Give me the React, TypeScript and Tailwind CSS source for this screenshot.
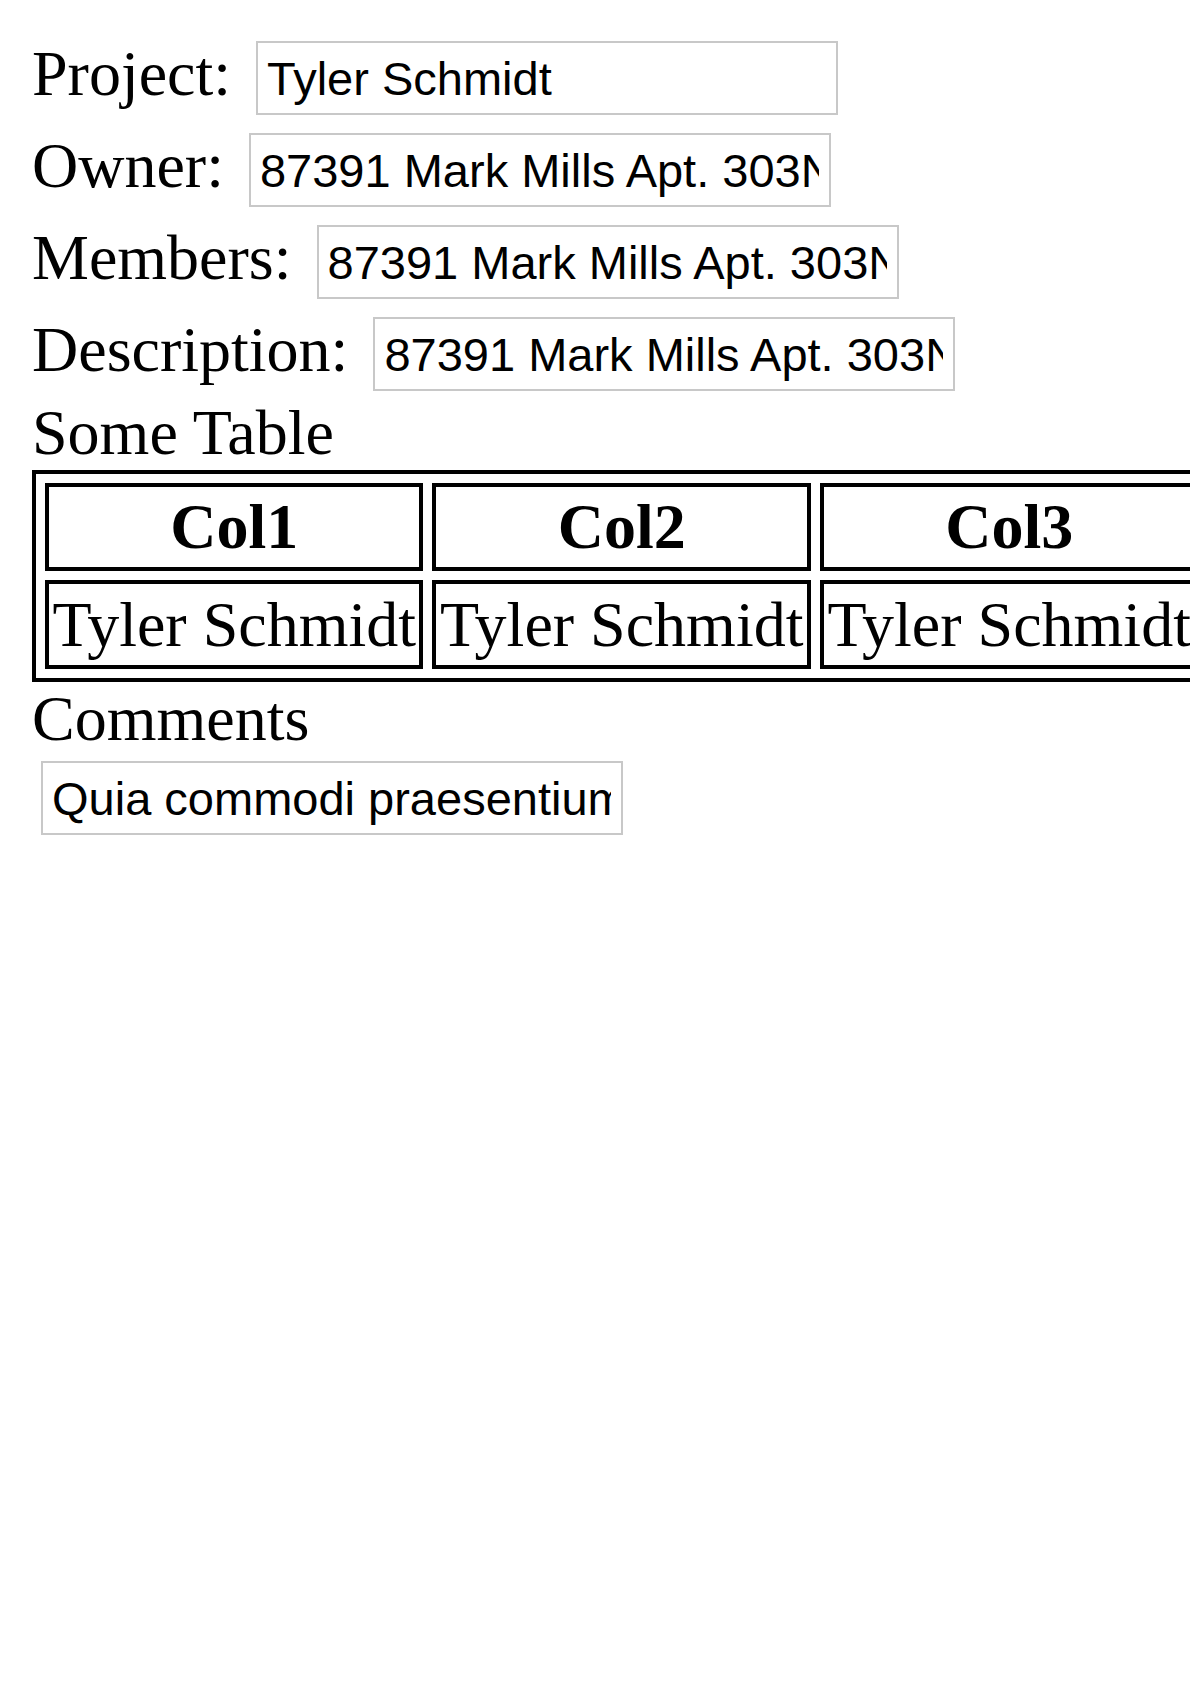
import React from "react";

const fields = [
  { label: "Project:", value: "Tyler Schmidt" },
  { label: "Owner:", value: "87391 Mark Mills Apt. 303North Jaylon, NV 12345" },
  { label: "Members:", value: "87391 Mark Mills Apt. 303North Jaylon, NV 12345" },
  { label: "Description:", value: "87391 Mark Mills Apt. 303North Jaylon, NV 12345" },
];

const inputClass =
  "block h-[74px] w-[582px] shrink-0 border-2 border-[#c8c8c8] bg-white pl-[9px] pr-[10px] font-['Liberation_Sans',Arial,sans-serif] text-[47px] leading-normal text-black outline-none";

const cell = "border-4 border-black p-[3.5px]";

export default function App() {
  return (
    <div className="min-h-screen w-full overflow-hidden bg-white text-black">
      <div className="flex flex-col pl-[32px] pt-[41px] font-['Liberation_Serif','Times_New_Roman',serif] text-[64px]">
        {/* form rows */}
        <div className="flex flex-col gap-[18px]">
          {fields.map((f) => (
            <div key={f.label} className="flex items-baseline gap-[25px]">
              <label className="leading-[60px]">{f.label}</label>
              <input readOnly value={f.value} className={inputClass} />
            </div>
          ))}
        </div>

        <div className="mt-[5px] leading-[73.6px]">Some Table</div>
        <table className="w-max border-separate border-spacing-[9px] border-4 border-black whitespace-nowrap leading-[73.6px]">
          <thead>
            <tr>
              <th className={cell + " text-center font-bold"}>Col1</th>
              <th className={cell + " text-center font-bold"}>Col2</th>
              <th className={cell + " text-center font-bold"}>Col3</th>
            </tr>
          </thead>
          <tbody>
            <tr>
              <td className={cell}>Tyler Schmidt</td>
              <td className={cell}>Tyler Schmidt</td>
              <td className={cell}>Tyler Schmidt</td>
            </tr>
          </tbody>
        </table>

        <div className="leading-[73.6px]">Comments</div>
        <div className="ml-[9px] mt-[6px]">
          <input
            readOnly
            value="Quia commodi praesentium voluptatem aut rerum."
            className={inputClass}
          />
        </div>
      </div>
    </div>
  );
}
